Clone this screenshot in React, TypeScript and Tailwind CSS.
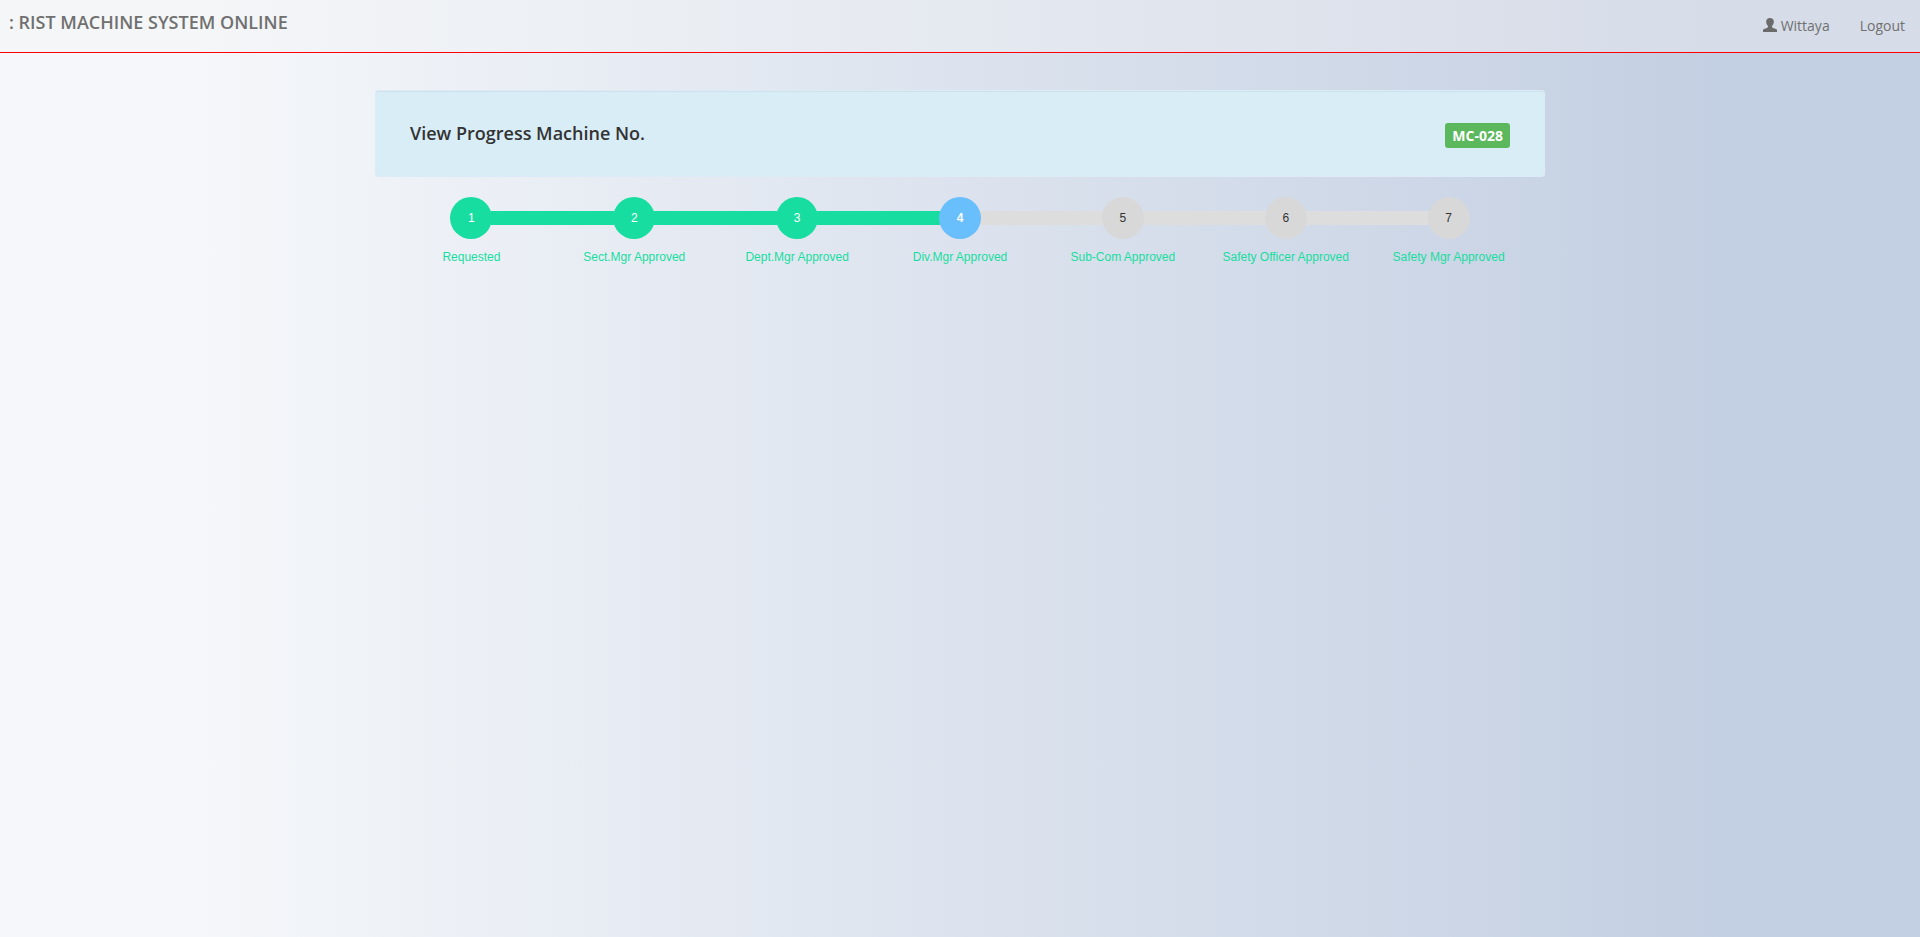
import React from "react";

const steps = [
  { label: "Requested", state: "done" },
  { label: "Sect.Mgr Approved", state: "done" },
  { label: "Dept.Mgr Approved", state: "done" },
  { label: "Div.Mgr Approved", state: "current" },
  { label: "Sub-Com Approved", state: "pending" },
  { label: "Safety Officer Approved", state: "pending" },
  { label: "Safety Mgr Approved", state: "pending" },
] as const;

const circleStyles = {
  done: "bg-[#18dda0] text-white",
  current: "bg-[#69befc] font-bold text-white",
  pending: "bg-[#d8d8d8] text-[#333333]",
};

function UserIcon() {
  return (
    <svg viewBox="0 0 14 14" className="size-[14px] fill-[#6b6b6b]" aria-hidden="true">
      <path d="M7 0C4.600 0 3.200 1.300 3.200 3.400c0 1.200.1 2 .5 2.900.3.700 1.200 1.300 1.300 2 .1.800-.3 1.300-1 1.600L1 11c-.7.3-1 .8-1 1.500V14h14v-1.500c0-.7-.3-1.200-1-1.500L10 9.900c-.7-.3-1.100-.8-1-1.600.1-.7 1-1.300 1.300-2 .4-.9.5-1.700.5-2.900C10.800 1.300 9.400 0 7 0z" />
    </svg>
  );
}

function connectorColor(active: boolean) {
  return active ? "bg-[#18dda0]" : "bg-[#dddddd]";
}

export default function App() {
  return (
    <div className="min-h-screen bg-[linear-gradient(90deg,#f5f7fa_10%,#c3cfe2_90%)] font-['Open_Sans',sans-serif] text-sm text-[#333333]">
      <header className="flex items-start justify-between border-b border-[#ff0000] bg-[linear-gradient(90deg,#f4f6f8_10%,#d6dce8_90%)] text-[#707070]">
        <a href="#" className="px-[9px] pt-3 text-lg leading-5 font-semibold">
          : RIST MACHINE SYSTEM ONLINE
        </a>
        <nav className="flex">
          <a href="#" className="flex items-center px-[15px] py-4 leading-5">
            <span className="mr-1 pb-0.5">
              <UserIcon />
            </span>
            Wittaya
          </a>
          <a href="#" className="px-[15px] py-4 leading-5">
            Logout
          </a>
        </nav>
      </header>

      <main className="mx-auto max-w-[1170px] pt-[37px]">
        <section className="flex items-start justify-between rounded-[3px] border border-[#dcebf5] bg-[#d9edf7] px-[34px] pt-8 pb-7 shadow-[inset_0_1px_1px_rgba(0,0,0,0.05)]">
          <h1 className="text-lg leading-5 font-[550]">View Progress Machine No.</h1>
          <span className="rounded-[3px] bg-[#5cb85c] px-[7px] py-[5px] text-sm leading-[15px] font-bold text-white">MC-028</span>
        </section>

        <ol className="mx-[15px] mt-5 grid grid-cols-7 font-['Liberation_Sans',sans-serif] text-xs">
          {steps.map((step, i) => (
            <li key={step.label} className="flex flex-col items-center gap-2">
              <div className="flex w-full items-center">
                <span className={`h-[14px] flex-1 ${i === 0 ? "" : connectorColor(i <= 3)}`} />
                <span className={`relative -mx-px flex size-[42px] items-center justify-center rounded-full ${circleStyles[step.state]}`}>
                  {i + 1}
                </span>
                <span className={`h-[14px] flex-1 ${i === steps.length - 1 ? "" : connectorColor(i < 3)}`} />
              </div>
              <span className="leading-5 whitespace-nowrap text-[#18dda0]">{step.label}</span>
            </li>
          ))}
        </ol>
      </main>
    </div>
  );
}
